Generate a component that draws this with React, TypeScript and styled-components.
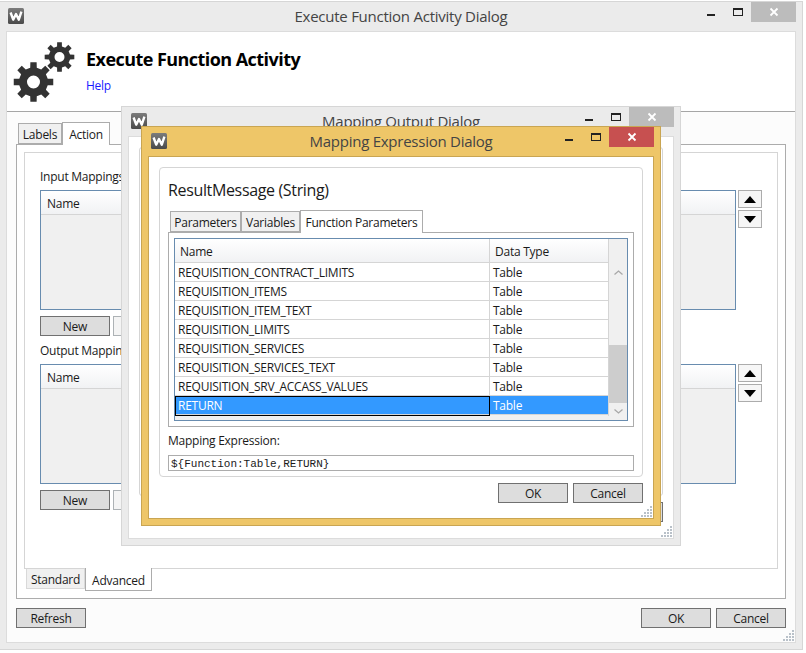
import styled, { createGlobalStyle } from 'styled-components';

const rows = [
  'REQUISITION_CONTRACT_LIMITS',
  'REQUISITION_ITEMS',
  'REQUISITION_ITEM_TEXT',
  'REQUISITION_LIMITS',
  'REQUISITION_SERVICES',
  'REQUISITION_SERVICES_TEXT',
  'REQUISITION_SRV_ACCASS_VALUES',
  'RETURN',
];

const gearPath = (cx: number, cy: number, outer: number, body: number, hole: number) => {
  const teeth = 8;
  const pts: string[] = [];
  const at = (r: number, deg: number) => {
    const a = ((deg - 90) * Math.PI) / 180;
    return `${(cx + r * Math.cos(a)).toFixed(2)} ${(cy + r * Math.sin(a)).toFixed(2)}`;
  };
  for (let i = 0; i < teeth; i++) {
    const c = (360 / teeth) * i;
    pts.push(at(body, c - 13), at(outer, c - 9), at(outer, c + 9), at(body, c + 13));
  }
  return `M${pts.join('L')}Z M${cx - hole} ${cy}a${hole} ${hole} 0 1 0 ${hole * 2} 0a${hole} ${hole} 0 1 0 ${-hole * 2} 0Z`;
};

function Logo() {
  return (
    <svg width="16" height="16" viewBox="0 0 16 16">
      <defs>
        <linearGradient id="logoFill" x1="0" y1="0" x2="0" y2="1">
          <stop offset="0" stopColor="#7c7c7c" />
          <stop offset="1" stopColor="#4a4a4a" />
        </linearGradient>
      </defs>
      <rect width="16" height="16" rx="1.5" fill="url(#logoFill)" />
      <path d="M2.6 4.5l2.6 7.2L8 6l2.8 5.7 2.6-8" fill="none" stroke="#fff" strokeWidth="2.4" strokeLinejoin="round" />
    </svg>
  );
}

function Controls({ hot }: { hot?: boolean }) {
  return (
    <ControlsBar>
      <MinGlyph />
      <MaxGlyph />
      <CloseButton $hot={hot}>
        <svg width="10" height="10" viewBox="0 0 10 10">
          <path d="M1.5 1.5l7 7M8.5 1.5l-7 7" stroke="#fff" strokeWidth="1.8" />
        </svg>
      </CloseButton>
    </ControlsBar>
  );
}

function Caption({ title, hot, logoInset = 3 }: { title: string; hot?: boolean; logoInset?: number }) {
  return (
    <CaptionBar>
      <LogoSlot $inset={logoInset}>
        <Logo />
      </LogoSlot>
      <CaptionTitle>{title}</CaptionTitle>
      <Controls hot={hot} />
    </CaptionBar>
  );
}

function Grip() {
  const dots: number[][] = [
    [8, 0],
    [8, 3],
    [5, 3],
    [8, 6],
    [5, 6],
    [2, 6],
    [8, 9],
    [5, 9],
    [2, 9],
    [-1, 9],
  ];
  return (
    <GripMark width="11" height="11" viewBox="-1 0 11 11">
      {dots.map(([x, y]) => (
        <rect key={`${x}-${y}`} x={x} y={y} width="2" height="2" fill="#b9c1c9" />
      ))}
    </GripMark>
  );
}

function Arrow({ down }: { down?: boolean }) {
  return (
    <svg width="12" height="7" viewBox="0 0 12 7">
      <path d={down ? 'M0 0h12L6 7z' : 'M6 0l6 7H0z'} fill="#000" />
    </svg>
  );
}

function Chevron({ down }: { down?: boolean }) {
  return (
    <svg width="9" height="5" viewBox="0 0 9 5">
      <path d={down ? 'M.5.5l4 3.5 4-3.5' : 'M.5 4.5l4-3.5 4 3.5'} fill="none" stroke="#a8a8a8" strokeWidth="1.3" />
    </svg>
  );
}

function MappingList({ title }: { title: string }) {
  return (
    <Section>
      <FieldLabel>{title}</FieldLabel>
      <ListRow>
        <ListBox>
          <ListHead>Name</ListHead>
        </ListBox>
        <MoveButtons>
          <MoveButton>
            <Arrow />
          </MoveButton>
          <MoveButton>
            <Arrow down />
          </MoveButton>
        </MoveButtons>
      </ListRow>
      <ButtonRow>
        <Button>New</Button>
        <Button $disabled />
      </ButtonRow>
    </Section>
  );
}

export default function App() {
  return (
    <>
      <GlobalStyle />
      <Desktop>
        <Frame $w={804} $h={649}>
          <Caption title="Execute Function Activity Dialog" logoInset={2} />
          <Client>
            <Header>
              <svg width="62" height="62" viewBox="13 41 62 62">
                <path d={gearPath(59.5, 57, 15, 10.8, 5)} fill="#333" fillRule="evenodd" />
                <path d={gearPath(33.5, 82, 20, 14.6, 6.5)} fill="#333" fillRule="evenodd" />
              </svg>
              <HeaderText>
                <HeaderTitle>Execute Function Activity</HeaderTitle>
                <HelpLink>Help</HelpLink>
              </HeaderText>
            </Header>
            <Body>
              <TabRow>
                <Tab $w={44}>Labels</Tab>
                <Tab $w={48} $active>
                  Action
                </Tab>
              </TabRow>
              <TabPanel $h={455}>
                <Group>
                  <MappingList title="Input Mappings:" />
                  <MappingList title="Output Mappings:" />
                </Group>
                <BottomTabs>
                  <BottomTab $w={59}>Standard</BottomTab>
                  <BottomTab $w={67} $active>
                    Advanced
                  </BottomTab>
                </BottomTabs>
              </TabPanel>
              <Footer>
                <Button>Refresh</Button>
                <FooterRight>
                  <Button>OK</Button>
                  <Button>Cancel</Button>
                </FooterRight>
              </Footer>
            </Body>
            <Grip />
          </Client>
        </Frame>

        <DialogSlot $x={121} $y={106}>
          <Frame $w={560} $h={440}>
            <Caption title="Mapping Output Dialog" />
            <Client>
              <GhostContent>
                <GhostGroup />
                <GhostButton />
              </GhostContent>
              <Grip />
            </Client>
          </Frame>
        </DialogSlot>

        <DialogSlot $x={141} $y={126}>
          <Frame $w={520} $h={400} $accent>
            <Caption title="Mapping Expression Dialog" hot />
            <Client $accent>
              <ExpressionContent>
                <RoundGroup>
                  <ResultTitle>ResultMessage (String)</ResultTitle>
                  <TabRow>
                    <Tab $w={71}>Parameters</Tab>
                    <Tab $w={59}>Variables</Tab>
                    <Tab $w={123} $active>
                      Function Parameters
                    </Tab>
                  </TabRow>
                  <TabPanel $h={195} $pad={5}>
                    <DataGrid>
                      <GridMain>
                        <GridHead>
                          <HeadCell>Name</HeadCell>
                          <HeadCell>Data Type</HeadCell>
                        </GridHead>
                        {rows.map((row) => (
                          <GridRow key={row} $selected={row === 'RETURN'}>
                            <RowCell $focused={row === 'RETURN'}>{row}</RowCell>
                            <RowCell>Table</RowCell>
                          </GridRow>
                        ))}
                      </GridMain>
                      <ScrollBar>
                        <ScrollEnd $h={18}>
                          <Chevron />
                        </ScrollEnd>
                        <ScrollSpace />
                        <ScrollThumb />
                        <ScrollEnd $h={17}>
                          <Chevron down />
                        </ScrollEnd>
                      </ScrollBar>
                    </DataGrid>
                  </TabPanel>
                  <ExpressionLabel>Mapping Expression:</ExpressionLabel>
                  <ExpressionInput>{'${Function:Table,RETURN}'}</ExpressionInput>
                </RoundGroup>
                <DialogButtons>
                  <Button>OK</Button>
                  <Button>Cancel</Button>
                </DialogButtons>
              </ExpressionContent>
              <Grip />
            </Client>
          </Frame>
        </DialogSlot>
      </Desktop>
    </>
  );
}

const GlobalStyle = createGlobalStyle`
  html, body {
    margin: 0;
    padding: 0;
    background: #fff;
    overflow: hidden;
  }
  * {
    box-sizing: border-box;
  }
  body {
    font-family: "Open Sans", "Noto Sans", sans-serif;
    font-size: 12px;
    letter-spacing: -0.25px;
    color: #1a1a1a;
  }
`;

const Desktop = styled.div`
  position: relative;
  width: 806px;
  height: 653px;
  padding-top: 1px;
  margin-left: -1px;
`;

const DialogSlot = styled.div<{ $x: number; $y: number }>`
  position: absolute;
  left: ${(p) => p.$x + 1}px;
  top: ${(p) => p.$y}px;
`;

const Frame = styled.div<{ $w: number; $h: number; $accent?: boolean }>`
  width: ${(p) => p.$w}px;
  height: ${(p) => p.$h}px;
  display: flex;
  flex-direction: column;
  padding: 0 6px 6px;
  background: ${(p) => (p.$accent ? '#eec668' : '#ebebeb')};
  border: 1px solid ${(p) => (p.$accent ? '#c9a552' : '#d6d6d6')};
`;

const CaptionBar = styled.div`
  height: 29px;
  flex: none;
  display: grid;
  grid-template-columns: 1fr auto 1fr;
`;

const LogoSlot = styled.div<{ $inset: number }>`
  padding: 6px 0 0 ${(p) => p.$inset}px;
`;

const CaptionTitle = styled.div`
  font-size: 15px;
  line-height: 20px;
  padding-top: 4px;
  color: #444;
  letter-spacing: -0.25px;
  white-space: nowrap;
`;

const ControlsBar = styled.div`
  display: flex;
  justify-content: flex-end;
  align-items: flex-start;
`;

const MinGlyph = styled.div`
  width: 8px;
  height: 2px;
  margin: 12px 18px 0 0;
  background: #222;
`;

const MaxGlyph = styled.div`
  width: 10px;
  height: 8px;
  margin: 6px 8px 0 0;
  border: 1px solid #222;
  border-top-width: 2px;
`;

const CloseButton = styled.div<{ $hot?: boolean }>`
  width: 45px;
  height: 20px;
  display: flex;
  align-items: center;
  justify-content: center;
  background: ${(p) => (p.$hot ? '#c75050' : '#bcbcbc')};
`;

const Client = styled.div<{ $accent?: boolean }>`
  position: relative;
  flex: 1;
  min-height: 0;
  background: #fcfcfc;
  border: 1px solid ${(p) => (p.$accent ? '#c9a552' : '#dcdcdc')};
`;

const GripMark = styled.svg`
  position: absolute;
  right: 1px;
  bottom: 1px;
`;

const Header = styled.div`
  height: 80px;
  display: flex;
  align-items: flex-start;
  gap: 11px;
  padding: 9px 0 0 6px;
  background: #fff;
  border-bottom: 1px solid #a6a6a6;
`;

const HeaderText = styled.div`
  display: flex;
  flex-direction: column;
  align-items: flex-start;
`;

const HeaderTitle = styled.div`
  font-size: 18px;
  line-height: 24px;
  margin-top: 6px;
  font-weight: 700;
  color: #000;
  letter-spacing: -0.55px;
`;

const HelpLink = styled.a`
  margin: 7px 0 0;
  line-height: 16px;
  color: #1a1aff;
`;

const Body = styled.div`
  padding: 10px 9px 0;
`;

const TabRow = styled.div`
  height: 22px;
  display: flex;
  align-items: flex-end;
  padding-left: 2px;
`;

const Tab = styled.div<{ $w: number; $active?: boolean }>`
  position: relative;
  z-index: ${(p) => (p.$active ? 1 : 0)};
  width: ${(p) => p.$w}px;
  height: ${(p) => (p.$active ? 23 : 21)}px;
  margin-bottom: ${(p) => (p.$active ? -1 : 0)}px;
  padding-top: ${(p) => (p.$active ? 0 : 1)}px;
  display: flex;
  align-items: center;
  justify-content: center;
  background: ${(p) => (p.$active ? '#fff' : '#f0f0f0')};
  border: 1px solid #acacac;
  border-bottom: ${(p) => (p.$active ? 'none' : '1px solid #acacac')};
  white-space: nowrap;
`;

const TabPanel = styled.div<{ $h: number; $pad?: number }>`
  height: ${(p) => p.$h}px;
  display: flex;
  flex-direction: column;
  padding: ${(p) => p.$pad ?? 7}px;
  background: #fff;
  border: 1px solid #acacac;
`;

const Group = styled.div`
  flex: 1;
  display: flex;
  flex-direction: column;
  gap: 7px;
  padding: 16px 15px 0;
  border: 1px solid #d5d5d5;
`;

const Section = styled.div`
  display: flex;
  flex-direction: column;
`;

const FieldLabel = styled.div`
  line-height: 16px;
  margin-bottom: 5px;
`;

const ListRow = styled.div`
  display: flex;
  gap: 2px;
`;

const ListBox = styled.div`
  flex: 1;
  height: 120px;
  background: #f0f0f0;
  border: 1px solid #688caf;
`;

const ListHead = styled.div`
  height: 24px;
  line-height: 25px;
  padding-left: 6px;
  background: linear-gradient(#fff, #f1f2f4);
  border-bottom: 1px solid #d5d5d5;
`;

const MoveButtons = styled.div`
  display: flex;
  flex-direction: column;
  gap: 2px;
`;

const MoveButton = styled.div`
  width: 24px;
  height: 18px;
  display: flex;
  align-items: center;
  justify-content: center;
  background: #f6f6f6;
  border: 1px solid #acacac;
`;

const ButtonRow = styled.div`
  display: flex;
  gap: 3px;
  margin-top: 6px;
`;

const Button = styled.div<{ $disabled?: boolean }>`
  width: 70px;
  height: 20px;
  display: flex;
  align-items: center;
  justify-content: center;
  background: ${(p) => (p.$disabled ? '#f4f4f4' : '#dddddd')};
  border: 1px solid ${(p) => (p.$disabled ? '#adb2b5' : '#707070')};
`;

const BottomTabs = styled.div`
  position: relative;
  display: flex;
  align-items: flex-start;
  margin: -1px 0 0 2px;
`;

const BottomTab = styled.div<{ $w: number; $active?: boolean }>`
  width: ${(p) => p.$w}px;
  height: ${(p) => (p.$active ? 23 : 21)}px;
  padding-top: 2px;
  display: flex;
  align-items: center;
  justify-content: center;
  background: ${(p) => (p.$active ? '#fff' : '#f0f0f0')};
  border: 1px solid ${(p) => (p.$active ? '#acacac' : '#d9d9d9')};
  border-top: ${(p) => (p.$active ? 'none' : '1px solid #d5d5d5')};
`;

const Footer = styled.div`
  display: flex;
  justify-content: space-between;
  margin-top: 9px;
`;

const FooterRight = styled.div`
  display: flex;
  gap: 5px;
`;

const GhostContent = styled.div`
  display: flex;
  flex-direction: column;
  align-items: flex-end;
  padding: 10px 10px 0;
  background: #fff;
  height: 100%;
`;

const GhostGroup = styled.div`
  width: 100%;
  height: 349px;
  border: 1px solid #d5d5d5;
  border-radius: 3px;
`;

const GhostButton = styled.div`
  width: 70px;
  height: 20px;
  margin-top: 6px;
  background: #dddddd;
  border: 1px solid #707070;
`;

const ExpressionContent = styled.div`
  height: 100%;
  padding: 10px 10px 0;
  background: #fff;
`;

const RoundGroup = styled.div`
  height: 310px;
  padding: 11px 8px 0;
  border: 1px solid #d5d5d5;
  border-radius: 4px;
`;

const ResultTitle = styled.div`
  font-size: 16px;
  line-height: 22px;
  margin-bottom: 9px;
  letter-spacing: -0.35px;
`;

const DataGrid = styled.div`
  height: 183px;
  display: flex;
  background: #f0f0f0;
  border: 1px solid #688caf;
`;

const GridMain = styled.div`
  flex: 1;
  min-width: 0;
`;

const GridHead = styled.div`
  height: 24px;
  display: grid;
  grid-template-columns: 315px 1fr;
  background: linear-gradient(#fff, #f1f2f4);
  border-bottom: 1px solid #d5d5d5;
`;

const HeadCell = styled.div`
  line-height: 25px;
  padding-left: 5px;
  border-right: 1px solid #d5d5d5;
`;

const GridRow = styled.div<{ $selected?: boolean }>`
  height: 19px;
  display: grid;
  grid-template-columns: 315px 1fr;
  color: ${(p) => (p.$selected ? '#fff' : '#1a1a1a')};
  background: ${(p) => (p.$selected ? '#3399ff' : '#fff')};
  border-bottom: 1px solid #d5d5d5;
`;

const RowCell = styled.div<{ $focused?: boolean }>`
  line-height: 20px;
  padding-left: 3px;
  border-right: 1px solid ${(p) => (p.$focused ? '#000' : '#d5d5d5')};
  outline: ${(p) => (p.$focused ? '1px solid #000' : 'none')};
  outline-offset: -1px;
  white-space: nowrap;
`;

const ScrollBar = styled.div`
  flex: none;
  width: 18px;
  display: flex;
  flex-direction: column;
  padding-top: 24px;
`;

const ScrollEnd = styled.div<{ $h: number }>`
  height: ${(p) => p.$h}px;
  flex: none;
  display: flex;
  align-items: center;
  justify-content: center;
`;

const ScrollSpace = styled.div`
  flex: 1;
`;

const ScrollThumb = styled.div`
  height: 58px;
  flex: none;
  background: #cdcdcd;
`;

const ExpressionLabel = styled.div`
  line-height: 16px;
  margin: 6px 0;
`;

const ExpressionInput = styled.div`
  height: 16px;
  line-height: 16px;
  padding-left: 2px;
  font-family: "Liberation Mono", monospace;
  font-size: 11px;
  letter-spacing: 0;
  border: 1px solid #acacac;
`;

const DialogButtons = styled.div`
  display: flex;
  justify-content: flex-end;
  gap: 5px;
  margin-top: 6px;
`;
